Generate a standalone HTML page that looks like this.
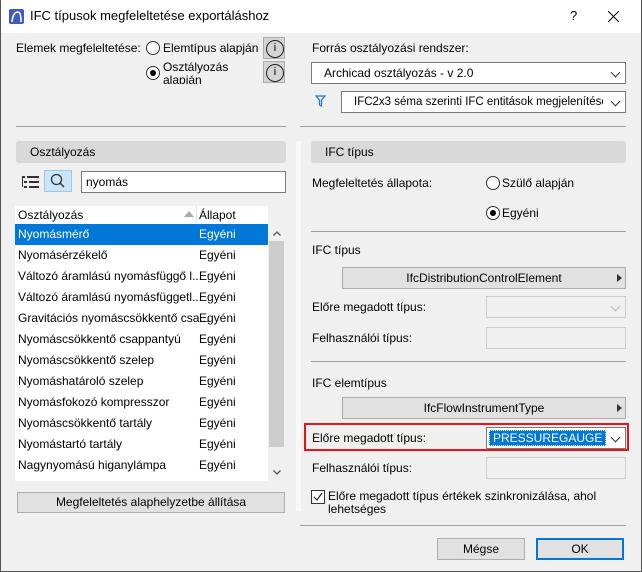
<!DOCTYPE html>
<html><head><meta charset="utf-8"><style>
*{box-sizing:border-box;margin:0;padding:0}
body{width:642px;height:572px;overflow:hidden;background:#f0f0f0;font-family:"Liberation Sans",sans-serif;font-size:12px;color:#000;position:relative}
.a{position:absolute;white-space:nowrap}
.t{position:absolute;white-space:nowrap;line-height:14px}
.radio{position:absolute;width:14px;height:14px;border:1px solid #333;border-radius:50%;background:#fff}
.radio.on::after{content:"";position:absolute;left:3px;top:3px;width:6px;height:6px;border-radius:50%;background:#000}
.info{position:absolute;width:22px;height:22px;background:#d4d4d4;border:1px solid #adadad}
.info::after{content:"i";position:absolute;left:2px;top:2px;width:16px;height:16px;border:1.2px solid #222;border-radius:50%;font-size:11px;text-align:center;line-height:15px}
.dd{position:absolute;background:#fff;border:1px solid #7a7a7a;height:22px;line-height:20px;padding-left:12px;overflow:hidden}
.chev{position:absolute;right:6px;top:6px;width:7px;height:7px;border-right:1px solid #333;border-bottom:1px solid #333;transform:rotate(45deg)}
.hdr{position:absolute;background:#d9d9d9;border-radius:3px;height:22px;line-height:22px;padding-left:14px}
.line{position:absolute;height:1px;background:#a0a0a0}
.btn{position:absolute;background:#e1e1e1;border:1px solid #adadad;height:22px;line-height:20px;text-align:center}
.tri{position:absolute;right:3px;top:6px;width:0;height:0;border-left:5px solid #333;border-top:4px solid transparent;border-bottom:4px solid transparent}
.field{position:absolute;background:#f0f0f0;border:1px solid #ccc}
.row{position:absolute;left:15px;width:253px;height:21px;line-height:21px}
.row span{position:absolute}
</style></head><body>
<div class="a" style="left:0;top:0;width:642px;height:33px;background:#fff"></div>
<div class="a" style="left:0;top:0;width:1px;height:572px;background:#555"></div>
<div class="a" style="left:641px;top:0;width:1px;height:572px;background:#555"></div>
<div class="a" style="left:0;top:571px;width:642px;height:1px;background:#555"></div>
<svg class="a" style="left:9px;top:9px" width="15" height="15"><rect width="15" height="15" rx="2" fill="#3d5bc4"/><path d="M3 13 Q4 3 9 3 Q12 3 12 13" stroke="#fff" stroke-width="1.6" fill="none"/></svg>
<div class="t" style="left:30px;top:9px;font-size:13px">IFC típusok megfeleltetése exportáláshoz</div>
<div class="t" style="left:570px;top:9px;font-size:13px">?</div>
<svg class="a" style="left:608px;top:11px" width="11" height="11"><path d="M0 0L11 11M11 0L0 11" stroke="#000" stroke-width="1"/></svg>

<div class="t" style="left:16px;top:41px">Elemek megfeleltetése:</div>
<div class="radio" style="left:146px;top:41px"></div>
<div class="t" style="left:163px;top:41px">Elemtípus alapján</div>
<div class="info" style="left:263px;top:37px"></div>
<div class="radio on" style="left:146px;top:66px"></div>
<div class="t" style="left:163px;top:60px">Osztályozás</div>
<div class="a" style="left:163px;top:73px;height:11px;overflow:hidden;line-height:14px">alapján</div>
<div class="info" style="left:263px;top:61px"></div>

<div class="t" style="left:312px;top:41px">Forrás osztályozási rendszer:</div>
<div class="dd" style="left:311px;top:62px;width:315px">Archicad osztályozás - v 2.0<div class="chev"></div></div>
<svg class="a" style="left:315px;top:95px" width="11" height="12"><path d="M1 1H10L6.5 5V11L4.5 10V5Z" fill="none" stroke="#1a73d9" stroke-width="1.2"/></svg>
<div class="dd" style="left:341px;top:91px;width:285px;font-size:11.5px">IFC2x3 séma szerinti IFC entitások megjelenítése<div class="a" style="right:0;top:0;width:22px;height:20px;background:#fff"></div><div class="chev"></div></div>

<div class="line" style="left:16px;top:126px;width:270px"></div>
<div class="line" style="left:300px;top:126px;width:326px"></div>
<div class="a" style="left:296px;top:141px;width:5px;height:370px;background:#f8f8f8"></div>

<div class="hdr" style="left:16px;top:141px;width:270px">Osztályozás</div>
<div class="hdr" style="left:311px;top:141px;width:315px">IFC típus</div>

<svg class="a" style="left:22px;top:176px" width="17" height="13"><g fill="#333"><rect x="0" y="0" width="3" height="2"/><rect x="5" y="0" width="12" height="2"/><rect x="2" y="5" width="3" height="2"/><rect x="7" y="5" width="10" height="2"/><rect x="2" y="10" width="3" height="2"/><rect x="7" y="10" width="10" height="2"/><rect x="0" y="2" width="1" height="9"/></g></svg>
<div class="a" style="left:44px;top:170px;width:28px;height:22px;background:#cce4f7;border:1px solid #99c9ef"></div>
<svg class="a" style="left:50px;top:173px" width="16" height="16"><circle cx="6.5" cy="6.5" r="5" fill="none" stroke="#333" stroke-width="1.3"/><path d="M10 10L14 14" stroke="#333" stroke-width="1.5"/></svg>
<div class="a" style="left:81px;top:171px;width:205px;height:22px;background:#fff;border:1px solid #7a7a7a;line-height:20px;padding-left:4px">nyomás</div>

<div class="a" style="left:15px;top:206px;width:253px;height:275px;background:#fff"></div>
<div class="t" style="left:18px;top:208px">Osztályozás</div>
<svg class="a" style="left:184px;top:211px" width="10" height="6"><path d="M0 6L5 0L10 6Z" fill="#aaa"/></svg>
<div class="a" style="left:196px;top:206px;width:1px;height:18px;background:#e5e5e5"></div>
<div class="t" style="left:199px;top:208px">Állapot</div>
<div class="row" style="top:224px;background:#0078d7;color:#fff"><span style="left:3px">Nyomásmérő</span><span style="left:184px">Egyéni</span></div>
<div class="row" style="top:245px"><span style="left:3px">Nyomásérzékelő</span><span style="left:184px">Egyéni</span></div>
<div class="row" style="top:266px"><span style="left:3px">Változó áramlású nyomásfüggő l...</span><span style="left:184px">Egyéni</span></div>
<div class="row" style="top:287px"><span style="left:3px">Változó áramlású nyomásfüggetl...</span><span style="left:184px">Egyéni</span></div>
<div class="row" style="top:308px"><span style="left:3px">Gravitációs nyomáscsökkentő csa...</span><span style="left:184px">Egyéni</span></div>
<div class="row" style="top:329px"><span style="left:3px">Nyomáscsökkentő csappantyú</span><span style="left:184px">Egyéni</span></div>
<div class="row" style="top:350px"><span style="left:3px">Nyomáscsökkentő szelep</span><span style="left:184px">Egyéni</span></div>
<div class="row" style="top:371px"><span style="left:3px">Nyomáshatároló szelep</span><span style="left:184px">Egyéni</span></div>
<div class="row" style="top:392px"><span style="left:3px">Nyomásfokozó kompresszor</span><span style="left:184px">Egyéni</span></div>
<div class="row" style="top:413px"><span style="left:3px">Nyomáscsökkentő tartály</span><span style="left:184px">Egyéni</span></div>
<div class="row" style="top:434px"><span style="left:3px">Nyomástartó tartály</span><span style="left:184px">Egyéni</span></div>
<div class="row" style="top:455px"><span style="left:3px">Nagynyomású higanylámpa</span><span style="left:184px">Egyéni</span></div>
<svg class="a" style="left:273px;top:231px" width="8" height="5"><path d="M0.5 4.5L4 1L7.5 4.5" fill="none" stroke="#555" stroke-width="1.3"/></svg>
<div class="a" style="left:269px;top:241px;width:15px;height:206px;background:#cdcdcd"></div>
<svg class="a" style="left:273px;top:470px" width="8" height="5"><path d="M0.5 0.5L4 4L7.5 0.5" fill="none" stroke="#555" stroke-width="1.3"/></svg>
<div class="btn" style="left:17px;top:492px;width:268px;height:21px;line-height:19px">Megfeleltetés alaphelyzetbe állítása</div>

<div class="t" style="left:312px;top:176px">Megfeleltetés állapota:</div>
<div class="radio" style="left:486px;top:176px"></div>
<div class="t" style="left:502px;top:176px">Szülő alapján</div>
<div class="radio on" style="left:486px;top:206px"></div>
<div class="t" style="left:502px;top:206px">Egyéni</div>
<div class="line" style="left:311px;top:231px;width:315px"></div>
<div class="t" style="left:312px;top:243px">IFC típus</div>
<div class="btn" style="left:342px;top:267px;width:284px">IfcDistributionControlElement<div class="tri"></div></div>
<div class="t" style="left:312px;top:300px">Előre megadott típus:</div>
<div class="field" style="left:486px;top:296px;width:140px;height:22px"><div class="chev" style="border-color:#bbb"></div></div>
<div class="t" style="left:312px;top:331px">Felhasználói típus:</div>
<div class="field" style="left:486px;top:327px;width:140px;height:22px"></div>
<div class="line" style="left:311px;top:361px;width:315px"></div>
<div class="t" style="left:312px;top:376px">IFC elemtípus</div>
<div class="btn" style="left:342px;top:397px;width:284px">IfcFlowInstrumentType<div class="tri"></div></div>
<div class="a" style="left:304px;top:423px;width:325px;height:28px;border:2px solid #e8141c"></div>
<div class="t" style="left:312px;top:431px">Előre megadott típus:</div>
<div class="a" style="left:486px;top:427px;width:140px;height:22px;background:#fff;border:1px solid #7a7a7a"><div class="a" style="left:2px;top:2px;width:117px;height:16px;background:#0078d7;color:#fff;line-height:15px;padding-left:3px;border:1px dotted #fff">PRESSUREGAUGE</div><div class="chev"></div></div>
<div class="t" style="left:312px;top:461px">Felhasználói típus:</div>
<div class="field" style="left:486px;top:457px;width:140px;height:22px"></div>
<div class="a" style="left:311px;top:490px;width:14px;height:14px;background:#fff;border:1px solid #333"></div>
<svg class="a" style="left:312px;top:491px" width="12" height="12"><path d="M2 6L5 9L10 2" fill="none" stroke="#222" stroke-width="1.2"/></svg>
<div class="t" style="left:328px;top:489px">Előre megadott típus értékek szinkronizálása, ahol</div>
<div class="t" style="left:328px;top:502px">lehetséges</div>
<div class="line" style="left:300px;top:525px;width:326px"></div>
<div class="btn" style="left:437px;top:538px;width:88px">Mégse</div>
<div class="btn" style="left:536px;top:538px;width:88px;border:2px solid #0078d7;line-height:18px">OK</div>
</body></html>
